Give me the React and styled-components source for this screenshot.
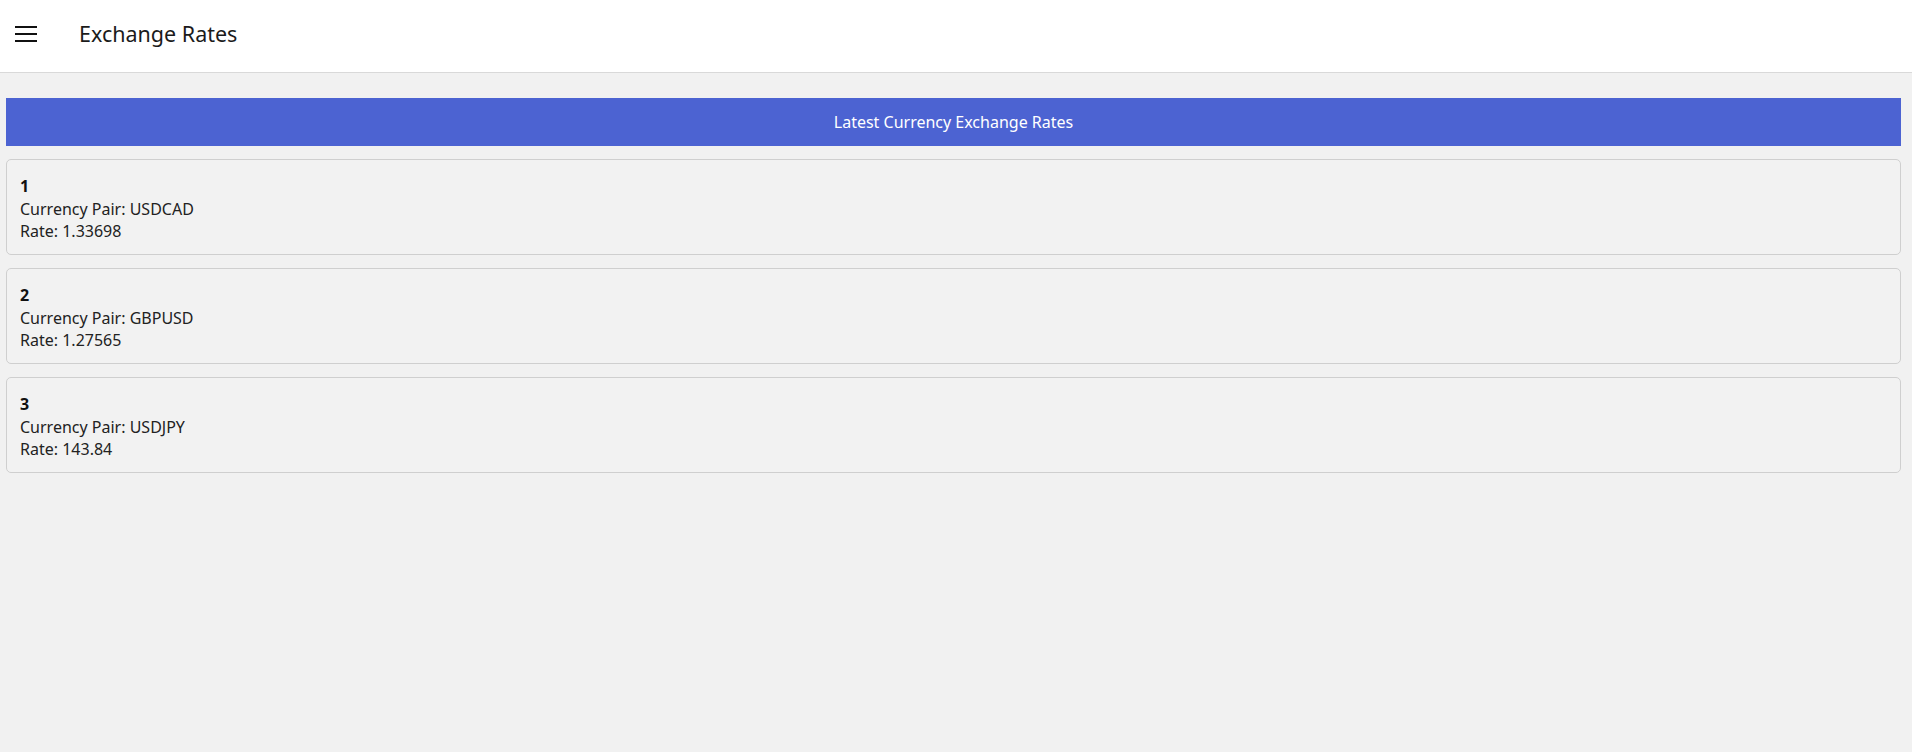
import React from 'react'
import styled, { createGlobalStyle } from 'styled-components'

const GlobalStyle = createGlobalStyle`
  html, body {
    margin: 0;
    padding: 0;
    background: #f1f1f1;
    font-family: "Noto Sans", "Open Sans", Arial, sans-serif;
    color: #222;
  }
  * { box-sizing: border-box; }
`

const Header = styled.header`
  height: 73px;
  background: #ffffff;
  border-bottom: 1px solid #d9d9d9;
  display: flex;
  align-items: center;
  padding: 0 0 5px 15px;
`

const MenuButton = styled.button`
  width: 22px;
  height: 16px;
  padding: 0;
  border: none;
  background: transparent;
  display: flex;
  flex-direction: column;
  justify-content: space-between;
  cursor: pointer;
  margin-right: 42px;

  span {
    display: block;
    height: 2px;
    background: #111;
  }
`

const Title = styled.h1`
  margin: 0;
  font-size: 21.5px;
  font-weight: 400;
  color: #1b1b1b;
`

const Main = styled.main`
  padding: 25px 11px 0 6px;
  display: flex;
  flex-direction: column;
  gap: 13px;
`

const Banner = styled.div`
  height: 48px;
  background: #4c63d2;
  color: #ffffff;
  display: flex;
  align-items: center;
  justify-content: center;
  font-size: 16px;
`

const Card = styled.div`
  border: 1px solid #cfcfcf;
  border-radius: 5px;
  background: #f2f2f2;
  padding: 15px 13px 11.5px 13px;
  font-size: 16px;
  line-height: 22.5px;
`

const Index = styled.div`
  font-weight: 700;
  color: #111;
`

const Line = styled.div``

const rates = [
  { pair: 'USDCAD', rate: '1.33698' },
  { pair: 'GBPUSD', rate: '1.27565' },
  { pair: 'USDJPY', rate: '143.84' },
]

const App = () => {
  return (
    <>
      <GlobalStyle />
      <Header>
        <MenuButton aria-label="menu">
          <span />
          <span />
          <span />
        </MenuButton>
        <Title>Exchange Rates</Title>
      </Header>
      <Main>
        <Banner>Latest Currency Exchange Rates</Banner>
        {rates.map((r, i) => (
          <Card key={r.pair}>
            <Index>{i + 1}</Index>
            <Line>Currency Pair: {r.pair}</Line>
            <Line>Rate: {r.rate}</Line>
          </Card>
        ))}
      </Main>
    </>
  )
}

export default App
